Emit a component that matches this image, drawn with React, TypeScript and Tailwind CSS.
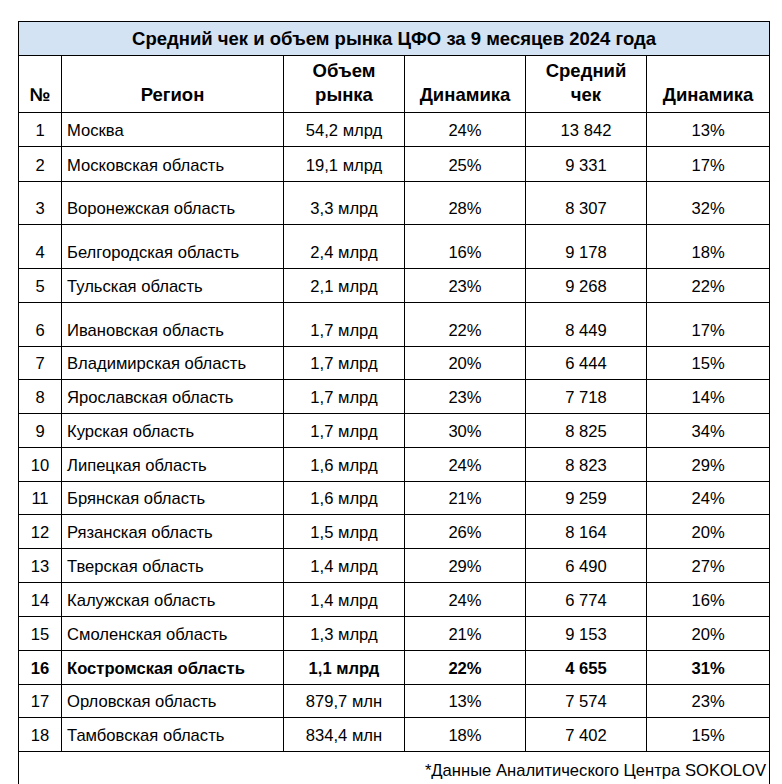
const rows: [string, string, string, string, string, string][] = [
  ["1", "Москва", "54,2 млрд", "24%", "13 842", "13%"],
  ["2", "Московская область", "19,1 млрд", "25%", "9 331", "17%"],
  ["3", "Воронежская область", "3,3 млрд", "28%", "8 307", "32%"],
  ["4", "Белгородская область", "2,4 млрд", "16%", "9 178", "18%"],
  ["5", "Тульская область", "2,1 млрд", "23%", "9 268", "22%"],
  ["6", "Ивановская область", "1,7 млрд", "22%", "8 449", "17%"],
  ["7", "Владимирская область", "1,7 млрд", "20%", "6 444", "15%"],
  ["8", "Ярославская область", "1,7 млрд", "23%", "7 718", "14%"],
  ["9", "Курская область", "1,7 млрд", "30%", "8 825", "34%"],
  ["10", "Липецкая область", "1,6 млрд", "24%", "8 823", "29%"],
  ["11", "Брянская область", "1,6 млрд", "21%", "9 259", "24%"],
  ["12", "Рязанская область", "1,5 млрд", "26%", "8 164", "20%"],
  ["13", "Тверская область", "1,4 млрд", "29%", "6 490", "27%"],
  ["14", "Калужская область", "1,4 млрд", "24%", "6 774", "16%"],
  ["15", "Смоленская область", "1,3 млрд", "21%", "9 153", "20%"],
  ["16", "Костромская область", "1,1 млрд", "22%", "4 655", "31%"],
  ["17", "Орловская область", "879,7 млн", "13%", "7 574", "23%"],
  ["18", "Тамбовская область", "834,4 млн", "18%", "7 402", "15%"],
];

// row heights taken from the screenshot (the rows are not all equal)
const heights = [
  "h-[34px]", "h-[35px]", "h-[43px]", "h-[44px]", "h-[34px]", "h-[44px]",
  "h-[33px]", "h-[34px]", "h-[34px]", "h-[34px]", "h-[33px]", "h-[34px]",
  "h-[34px]", "h-[34px]", "h-[34px]", "h-[34px]", "h-[33px]", "h-[34px]",
];

const cell = "border border-black align-bottom pb-[5px] leading-5";
const head = "border border-black align-bottom pb-[5px] leading-6";

export default function App() {
  return (
    <div className="min-h-screen bg-white pl-[18px] pt-[21px] text-black font-['Liberation_Sans',Arial,sans-serif] text-[16.6px]">
      <table className="w-[751px] table-fixed border-collapse">
        <colgroup>
          <col className="w-[43px]" />
          <col className="w-[222px]" />
          <col className="w-[121px]" />
          <col className="w-[121px]" />
          <col className="w-[121px]" />
          <col className="w-[123px]" />
        </colgroup>
        <thead className="text-[18.5px]">
          <tr className="h-[34px]">
            <th colSpan={6} className="border border-black bg-[#d4e3f3] text-center font-bold leading-5 whitespace-nowrap">
              Средний чек и объем рынка ЦФО за 9 месяцев 2024 года
            </th>
          </tr>
          <tr className="h-[57px] font-bold">
            <th className={head}>№</th>
            <th className={head}>Регион</th>
            <th className={head}>
              Объем
              <br />
              рынка
            </th>
            <th className={head}>Динамика</th>
            <th className={head}>
              Средний
              <br />
              чек
            </th>
            <th className={head}>Динамика</th>
          </tr>
        </thead>
        <tbody>
          {rows.map((r, i) => (
            <tr key={r[0]} className={`${heights[i]} ${r[0] === "16" ? "font-bold" : ""}`}>
              <td className={`${cell} text-center`}>{r[0]}</td>
              <td className={`${cell} pl-[5px] text-left whitespace-nowrap`}>{r[1]}</td>
              <td className={`${cell} text-center`}>{r[2]}</td>
              <td className={`${cell} text-center`}>{r[3]}</td>
              <td className={`${cell} text-center`}>{r[4]}</td>
              <td className={`${cell} text-center`}>{r[5]}</td>
            </tr>
          ))}
          <tr className="h-[40px]">
            <td colSpan={6} className="border border-black align-top pt-[9px] pr-[3px] text-right leading-5 whitespace-nowrap">
              *Данные Аналитического Центра SOKOLOV
            </td>
          </tr>
        </tbody>
      </table>
    </div>
  );
}
